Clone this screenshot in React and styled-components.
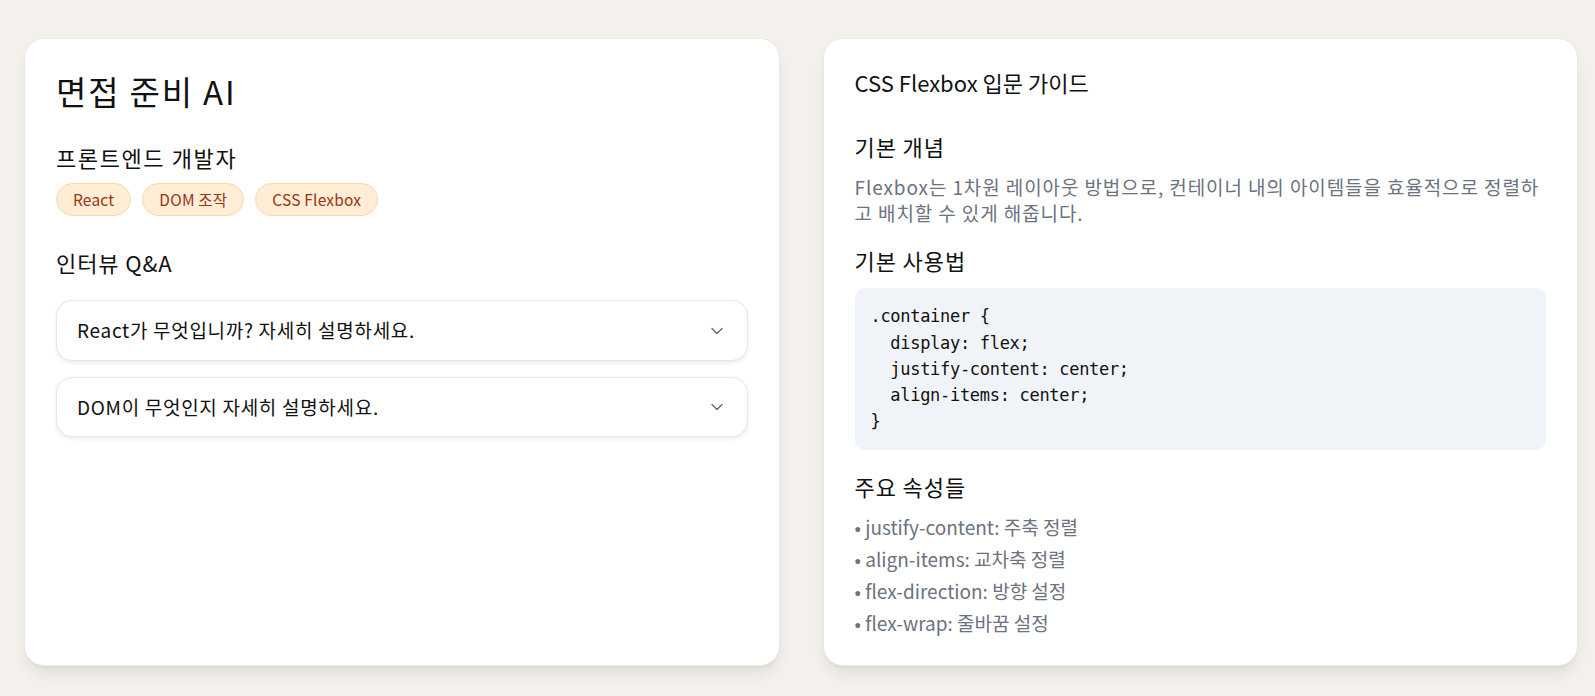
import styled, { createGlobalStyle } from 'styled-components';

const GlobalStyle = createGlobalStyle`
  * { box-sizing: border-box; }
  html, body { margin: 0; padding: 0; }
  body {
    background: #f4f1ec;
    font-family: "Noto Sans CJK KR", "Noto Sans", sans-serif;
    color: #111111;
  }
`;

const Page = styled.div`
  height: 100vh;
  display: grid;
  grid-template-columns: 1fr 1fr;
  grid-template-rows: minmax(0, 1fr);
  gap: 43px;
  padding: 38px 17px 30px 24px;
`;

const Card = styled.section`
  background: #ffffff;
  border: 1px solid #ebe8e4;
  border-radius: 20px;
  padding: 30px 31px;
  box-shadow: 0 10px 15px -3px rgba(0, 0, 0, 0.08), 0 4px 6px -4px rgba(0, 0, 0, 0.08);
  display: flex;
  flex-direction: column;
`;

const Title = styled.h1`
  margin: 0 0 29px;
  font-size: 33px;
  line-height: 44px;
  font-weight: 400;
  letter-spacing: 1.8px;
`;

const SubHeading = styled.h2`
  margin: 0 0 ${({ $mb }) => $mb}px;
  font-size: 22px;
  line-height: 30px;
  font-weight: 400;
  letter-spacing: ${({ $ls }) => $ls}px;
`;

const ChipRow = styled.div`
  display: flex;
  gap: 11px;
  margin-bottom: 31px;
`;

const Chip = styled.span`
  padding: 5px 16px;
  border: 1px solid #fed7aa;
  border-radius: 999px;
  background: #ffedd5;
  color: #9a3412;
  font-size: 15.5px;
  line-height: 21.4px;
  letter-spacing: 0.2px;
`;

const AccordionList = styled.div`
  display: flex;
  flex-direction: column;
  gap: 16px;
`;

const AccordionItem = styled.button`
  display: flex;
  align-items: center;
  justify-content: space-between;
  width: 100%;
  padding: 16px 20px;
  border: 1px solid #e5e7eb;
  border-radius: 16px;
  background: #ffffff;
  box-shadow: 0 2px 4px rgba(0, 0, 0, 0.08);
  font-family: inherit;
  font-size: 19px;
  line-height: 26.4px;
  letter-spacing: 0.7px;
  color: #111111;
  text-align: left;
  cursor: pointer;
`;

const Chevron = () => (
  <svg width="20" height="20" viewBox="0 0 24 24" fill="none" stroke="#6b6b7b" strokeWidth="1.7" strokeLinecap="round" strokeLinejoin="round">
    <path d="m6 9 6 6 6-6" />
  </svg>
);

const GuideTitle = styled.h1`
  margin: 0 0 36px;
  font-size: 22px;
  line-height: 26px;
  font-weight: 400;
`;

const Section = styled.div`
  margin-bottom: ${({ $mb }) => $mb}px;
`;

const SectionHeading = styled.h2`
  margin: 0 0 13px;
  font-size: 22px;
  line-height: 30px;
  font-weight: 400;
  letter-spacing: 0.9px;
`;

const Paragraph = styled.p`
  margin: 0;
  font-size: 19px;
  line-height: 26.4px;
  letter-spacing: 0.9px;
  color: #6b7280;
`;

const CodeBlock = styled.pre`
  margin: 0;
  padding: 15.5px 16px;
  border-radius: 10px;
  background: #f0f3f8;
  font-family: "DejaVu Sans Mono", "Liberation Mono", monospace;
  font-size: 17px;
  letter-spacing: -0.3px;
  line-height: 26.2px;
  color: #111111;
`;

const PropList = styled.ul`
  margin: 0;
  padding: 0;
  list-style: none;
  display: flex;
  flex-direction: column;
  gap: 5.5px;
`;

const PropItem = styled.li`
  font-size: 19px;
  line-height: 26.4px;
  color: #6b7280;
`;

const skills = ['React', 'DOM 조작', 'CSS Flexbox'];
const questions = ['React가 무엇입니까? 자세히 설명하세요.', 'DOM이 무엇인지 자세히 설명하세요.'];
const props = ['justify-content: 주축 정렬', 'align-items: 교차축 정렬', 'flex-direction: 방향 설정', 'flex-wrap: 줄바꿈 설정'];

const code = `.container {
  display: flex;
  justify-content: center;
  align-items: center;
}`;

export default function App() {
  return (
    <>
      <GlobalStyle />
      <Page>
        <Card>
          <Title>면접 준비 AI</Title>
          <SubHeading $mb={11} $ls={1.6}>프론트엔드 개발자</SubHeading>
          <ChipRow>
            {skills.map((s) => (
              <Chip key={s}>{s}</Chip>
            ))}
          </ChipRow>
          <SubHeading $mb={23} $ls={0.9}>인터뷰 Q&amp;A</SubHeading>
          <AccordionList>
            {questions.map((q) => (
              <AccordionItem key={q}>
                <span>{q}</span>
                <Chevron />
              </AccordionItem>
            ))}
          </AccordionList>
        </Card>

        <Card>
          <GuideTitle>CSS Flexbox 입문 가이드</GuideTitle>
          <Section $mb={18}>
            <SectionHeading>기본 개념</SectionHeading>
            <Paragraph>
              Flexbox는 1차원 레이아웃 방법으로, 컨테이너 내의 아이템들을 효율적으로 정렬하고 배치할 수 있게 해줍니다.
            </Paragraph>
          </Section>
          <Section $mb={21}>
            <SectionHeading>기본 사용법</SectionHeading>
            <CodeBlock>{code}</CodeBlock>
          </Section>
          <Section $mb={0}>
            <SectionHeading>주요 속성들</SectionHeading>
            <PropList>
              {props.map((p) => (
                <PropItem key={p}>• {p}</PropItem>
              ))}
            </PropList>
          </Section>
        </Card>
      </Page>
    </>
  );
}
